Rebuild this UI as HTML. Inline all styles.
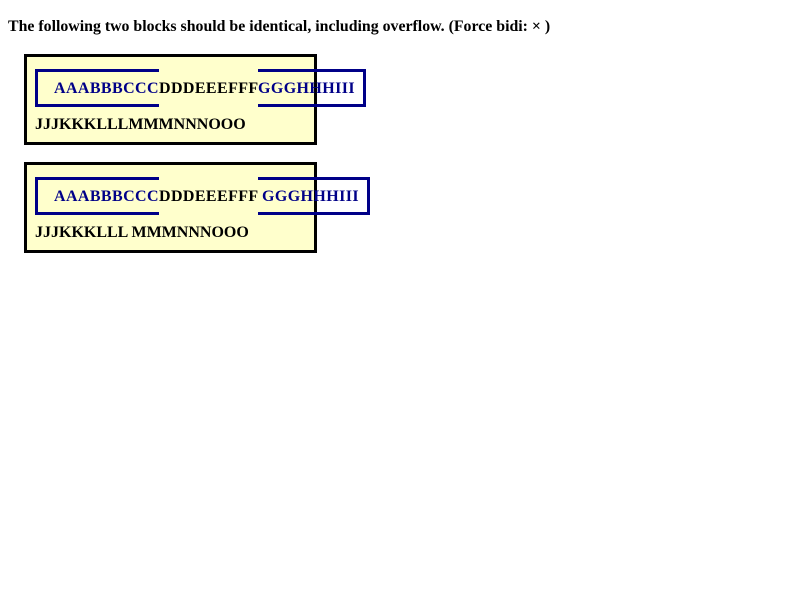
<!DOCTYPE html>
<html><head><style>
body{margin:0;width:800px;height:600px;background:#fff;font-family:"Liberation Serif",serif;font-weight:bold;font-size:16px;position:relative;overflow:hidden}
div,span{position:absolute;white-space:nowrap}
.outer{border:3px solid #000;background:#ffc;left:24px;width:287px;height:85px}
.t{line-height:16px}
.b{color:#008;letter-spacing:0.4px}
.k{color:#000;letter-spacing:0.4px}
.bl{background:#008}
</style></head><body>
<div class="t" style="left:8px;top:19px;font-size:15.85px">The following two blocks should be identical, including overflow. (Force bidi: × )</div>

<div class="outer" style="top:54px"></div>
<div class="bl" style="left:35px;top:69px;width:124px;height:3px"></div>
<div class="bl" style="left:35px;top:104px;width:124px;height:3px"></div>
<div class="bl" style="left:35px;top:69px;width:3px;height:38px"></div>
<div class="bl" style="left:258px;top:69px;width:108px;height:3px"></div>
<div class="bl" style="left:258px;top:104px;width:108px;height:3px"></div>
<div class="bl" style="left:363px;top:69px;width:3px;height:38px"></div>
<span class="t b" style="left:54px;top:81px">AAABBBCCC</span>
<span class="t k" style="left:159px;top:81px">DDDEEEFFF</span>
<span class="t b" style="left:258px;top:81px">GGGHHHIII</span>
<span class="t" style="left:35px;top:117px">JJJKKKLLLMMMNNNOOO</span>

<div class="outer" style="top:162px"></div>
<div class="bl" style="left:35px;top:177px;width:124px;height:3px"></div>
<div class="bl" style="left:35px;top:212px;width:124px;height:3px"></div>
<div class="bl" style="left:35px;top:177px;width:3px;height:38px"></div>
<div class="bl" style="left:258px;top:177px;width:112px;height:3px"></div>
<div class="bl" style="left:258px;top:212px;width:112px;height:3px"></div>
<div class="bl" style="left:367px;top:177px;width:3px;height:38px"></div>
<span class="t b" style="left:54px;top:189px">AAABBBCCC</span>
<span class="t k" style="left:159px;top:189px">DDDEEEFFF</span>
<span class="t b" style="left:262px;top:189px">GGGHHHIII</span>
<span class="t" style="left:35px;top:225px">JJJKKKLLL MMMNNNOOO</span>
</body></html>
